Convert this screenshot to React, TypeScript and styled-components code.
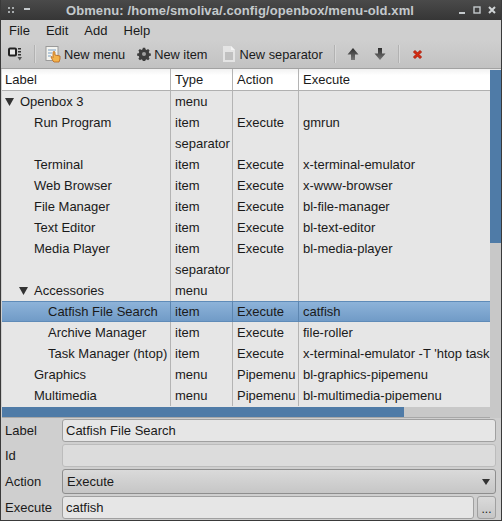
import styled, { createGlobalStyle } from 'styled-components';

const GlobalStyle = createGlobalStyle`
  html, body {
    margin: 0;
    padding: 0;
    background: #3a3a3a;
  }
`;

const Window = styled.div`
  width: 502px;
  height: 521px;
  box-sizing: border-box;
  display: flex;
  flex-direction: column;
  overflow: hidden;
  background: #cfcfcf;
  border: 1px solid #3a3a3a;
  border-top: none;
  font-family: 'Liberation Sans', Arial, sans-serif;
  font-size: 13px;
  color: #1a1a1a;
`;

const TitleBar = styled.div`
  height: 20px;
  flex: none;
  display: flex;
  align-items: center;
  background: linear-gradient(#4a4a4a, #363636);
  color: #c4c9cc;
  font-size: 13px;
  font-weight: 700;
  padding: 0 5px 0 6px;
`;

const TitleText = styled.div`
  flex: 1;
  text-align: center;
  padding-right: 8px;
  letter-spacing: 0.1px;
  white-space: nowrap;
`;

const WinButtons = styled.div`
  display: flex;
  gap: 7px;
  align-items: center;
`;

const MenuBar = styled.div`
  height: 20px;
  flex: none;
  display: flex;
  align-items: center;
  gap: 16px;
  padding: 0 8px;
  background: #cfcfcf;
`;

const Toolbar = styled.div`
  height: 28px;
  flex: none;
  display: flex;
  align-items: center;
  padding: 0 6px;
  font-size: 12.8px;
  background: linear-gradient(#cfcfcf, #c2c2c2);
  border-bottom: 1px solid #a2a2a2;
`;

const ToolSep = styled.div`
  width: 1px;
  height: 18px;
  background: #b2b2b2;
  box-shadow: 1px 0 0 #d8d8d8;
`;

const ToolButton = styled.div<{ $ml?: number; $gap?: number }>`
  display: flex;
  align-items: center;
  gap: ${props => props.$gap ?? 3}px;
  margin-left: ${props => props.$ml ?? 0}px;
  white-space: nowrap;
`;

const TreeArea = styled.div`
  flex: 1;
  min-height: 0;
  display: grid;
  grid-template-columns: 1fr 11px;
  margin: 0 0 0 1px;
`;

const TreeMain = styled.div`
  min-width: 0;
  overflow: hidden;
  display: flex;
  flex-direction: column;
  background: #e6e6e6;
`;

const Row = styled.div<{ $selected?: boolean }>`
  flex: none;
  height: 21px;
  box-sizing: border-box;
  display: grid;
  grid-template-columns: 169px 62px 66px 1fr;
  line-height: 20px;
  background: ${props => (props.$selected ? 'linear-gradient(#8fb4da, #6f9ac6)' : 'transparent')};
  box-shadow: ${props => (props.$selected ? 'inset 0 1px 0 #5f8bb8, inset 0 -1px 0 #5f8bb8' : 'none')};
`;

const HeadRow = styled(Row)`
  height: 22px;
  background: linear-gradient(#f2f2f2, #ffffff 30%);
  border-bottom: 1px solid #b0b0b0;
`;

const Cell = styled.div<{ $depth?: number; $selected?: boolean; $last?: boolean }>`
  box-sizing: border-box;
  padding-left: ${props => (props.$depth !== undefined ? 3 + props.$depth * 14 : 4)}px;
  border-right: ${props =>
    props.$last ? '0' : `1px solid ${props.$selected ? '#5d86b0' : '#b4b4b4'}`};
  white-space: nowrap;
  overflow: hidden;
  display: flex;
  align-items: center;
`;

const HeadCell = styled(Cell)<{ $first?: boolean }>`
  padding-left: ${props => (props.$first ? 3 : 4)}px;
  padding-top: 1px;
`;

const Arrow = styled.svg`
  flex: none;
  width: 9px;
  height: 8px;
  margin-right: 6px;
`;

const NoArrow = styled.span`
  flex: none;
  width: 15px;
`;

const VScroll = styled.div`
  background: #c8c8c8;
  border-top: 1px solid #e6e6e6;
`;

const VThumb = styled.div`
  height: 173px;
  background: #4f7ba7;
`;

const HScroll = styled.div`
  flex: none;
  height: 11px;
  box-sizing: border-box;
  margin-top: auto;
  background: #c8c8c8;
  border-bottom: 1px solid #a8a8a8;
`;

const HThumb = styled.div`
  width: 402px;
  height: 100%;
  background: #4f7ba7;
`;

const Form = styled.div`
  flex: none;
  display: grid;
  grid-template-columns: 57px 1fr;
  row-gap: 2px;
  align-items: center;
  padding: 1px 5px 1px 4px;
  background: #cfcfcf;
`;

const FieldLabel = styled.div`
  line-height: 22px;
`;

const Input = styled.div<{ $disabled?: boolean }>`
  height: 23px;
  box-sizing: border-box;
  padding-left: 3px;
  line-height: 21px;
  border: 1px solid ${props => (props.$disabled ? '#bcbcbc' : '#a0a0a0')};
  border-radius: 3px;
  background: ${props => (props.$disabled ? '#dcdcdc' : '#e6e6e6')};
`;

const Combo = styled.div`
  height: 25px;
  box-sizing: border-box;
  display: flex;
  justify-content: space-between;
  align-items: center;
  padding: 0 5px 0 4px;
  border: 1px solid #8e8e8e;
  border-radius: 3px;
  background: linear-gradient(#dadada, #c6c6c6);
`;

const ExecRow = styled.div`
  display: flex;
  gap: 3px;
`;

const ExecInput = styled(Input)`
  flex: 1;
`;

const DotsButton = styled.div`
  width: 19px;
  height: 23px;
  box-sizing: border-box;
  border: 1px solid #a0a0a0;
  border-radius: 3px;
  background: linear-gradient(#dadada, #c6c6c6);
  text-align: center;
  line-height: 24px;
  font-size: 12px;
`;

const GEAR =
  'M6.5 0h3l.4 2 1.5.7 1.8-1.1 2 2-1.1 1.8.7 1.5 2 .4v3l-2 .4-.7 1.5 1.1 1.8-2 2-1.8-1.1-1.5.7-.4 2h-3l-.4-2-1.5-.7-1.8 1.1-2-2 1.1-1.8-.7-1.5-2-.4v-3l2-.4.7-1.5-1.1-1.8 2-2 1.8 1.1 1.5-.7z';

interface TreeRow {
  label: string;
  depth: number;
  open?: boolean;
  type?: string;
  action?: string;
  execute?: string;
  selected?: boolean;
}

const rows: TreeRow[] = [
  { label: 'Openbox 3', depth: 0, open: true, type: 'menu' },
  { label: 'Run Program', depth: 1, type: 'item', action: 'Execute', execute: 'gmrun' },
  { label: '', depth: 1, type: 'separator' },
  { label: 'Terminal', depth: 1, type: 'item', action: 'Execute', execute: 'x-terminal-emulator' },
  { label: 'Web Browser', depth: 1, type: 'item', action: 'Execute', execute: 'x-www-browser' },
  { label: 'File Manager', depth: 1, type: 'item', action: 'Execute', execute: 'bl-file-manager' },
  { label: 'Text Editor', depth: 1, type: 'item', action: 'Execute', execute: 'bl-text-editor' },
  { label: 'Media Player', depth: 1, type: 'item', action: 'Execute', execute: 'bl-media-player' },
  { label: ' ', depth: 1, type: 'separator' },
  { label: 'Accessories', depth: 1, open: true, type: 'menu' },
  { label: 'Catfish File Search', depth: 2, type: 'item', action: 'Execute', execute: 'catfish', selected: true },
  { label: 'Archive Manager', depth: 2, type: 'item', action: 'Execute', execute: 'file-roller' },
  { label: 'Task Manager (htop)', depth: 2, type: 'item', action: 'Execute', execute: "x-terminal-emulator -T 'htop task" },
  { label: 'Graphics', depth: 1, type: 'menu', action: 'Pipemenu', execute: 'bl-graphics-pipemenu' },
  { label: 'Multimedia', depth: 1, type: 'menu', action: 'Pipemenu', execute: 'bl-multimedia-pipemenu' },
];

function WinIcons() {
  return (
    <WinButtons>
      <svg width="8" height="8" viewBox="0 0 8 8">
        <rect x="1" y="6" width="6" height="2" fill="#c4c9cc" />
      </svg>
      <svg width="8" height="8" viewBox="0 0 8 8">
        <rect x="1" y="1" width="6" height="6" fill="none" stroke="#c4c9cc" strokeWidth="1.4" />
      </svg>
      <svg width="8" height="8" viewBox="0 0 8 8">
        <path d="M1 1l6 6M7 1l-6 6" stroke="#d0d4d6" strokeWidth="2" />
      </svg>
    </WinButtons>
  );
}

export default function App() {
  return (
    <>
      <GlobalStyle />
      <Window>
        <TitleBar>
          <svg width="23" height="8" viewBox="0 0 23 8">
            <path d="M1 1h2v2H1zM5 1h2v2H5zM1 5h2v2H1zM5 5h2v2H5z" fill="#a8acae" />
            <rect x="17" y="2" width="6" height="2" fill="#c4c9cc" />
          </svg>
          <TitleText>Obmenu: /home/smoliva/.config/openbox/menu-old.xml</TitleText>
          <WinIcons />
        </TitleBar>
        <MenuBar>
          <span>File</span>
          <span>Edit</span>
          <span>Add</span>
          <span>Help</span>
        </MenuBar>
        <Toolbar>
          <svg width="16" height="18" viewBox="0 0 16 18">
            <rect x="2" y="3.5" width="7" height="7" rx="1" fill="#e8e8e8" stroke="#222" strokeWidth="2" />
            <path d="M11 3h3v1.500h-3zM11 6h3v1.500h-3zM11 9h3v1.500h-3z" fill="#333" />
            <path d="M10.500 12h4.500l-2.250 3.500z" fill="#555" />
          </svg>
          <ToolButton $ml={11}>
            <ToolSep />
          </ToolButton>
          <ToolButton $ml={10} $gap={2}>
            <svg width="17" height="18" viewBox="0 0 17 18">
              <rect x="1" y="1.500" width="12" height="14" fill="#f4f4f0" stroke="#9a9a9a" />
              <path d="M3 5h8M3 8h4M3 11h3" stroke="#7aa0c4" />
              <path d="M8 16l-2-4 1-.5 1 1V7.500a1 1 0 0 1 2 0V10l5 1v3l-1 3H9z" fill="#f3b24b" stroke="#b5651d" strokeWidth=".8" />
            </svg>
            New menu
          </ToolButton>
          <ToolButton $ml={12}>
            <svg width="14" height="14" viewBox="-1 -1 18 18">
              <path d={GEAR} fill="#3d3d3d" />
              <circle cx="8" cy="8" r="2.600" fill="#a0a0a0" />
            </svg>
            New item
          </ToolButton>
          <ToolButton $ml={13}>
            <svg width="16" height="18" viewBox="0 0 16 18">
              <path d="M2 1h8l4 4v12H2z" fill="#e4e4e4" />
              <path d="M10 1v4h4z" fill="#f4f4f4" />
              <path d="M4 8h8M4 10h8M4 12h8M4 14h8" stroke="#9c9c9c" />
            </svg>
            New separator
          </ToolButton>
          <ToolButton $ml={11}>
            <ToolSep />
          </ToolButton>
          <ToolButton $ml={12}>
            <svg width="12" height="14" viewBox="0 0 12 14">
              <defs>
                <linearGradient id="upFade" x1="0" y1="0" x2="0" y2="1">
                  <stop offset="0" stopColor="#2e2e2e" />
                  <stop offset="1" stopColor="#777" />
                </linearGradient>
              </defs>
              <path d="M6 1l5.500 6.500H8V13H4V7.500H.5z" fill="url(#upFade)" />
            </svg>
          </ToolButton>
          <ToolButton $ml={15}>
            <svg width="12" height="14" viewBox="0 0 12 14">
              <defs>
                <linearGradient id="downFade" x1="0" y1="0" x2="0" y2="1">
                  <stop offset="0" stopColor="#2e2e2e" />
                  <stop offset="1" stopColor="#777" />
                </linearGradient>
              </defs>
              <path d="M6 13L.5 6.500H4V1h4v5.500h3.500z" fill="url(#downFade)" />
            </svg>
          </ToolButton>
          <ToolButton $ml={12}>
            <ToolSep />
          </ToolButton>
          <ToolButton $ml={13}>
            <svg width="11" height="11" viewBox="0 0 11 11">
              <path d="M1.500 3L3 1.500l2.500 2.500L8 1.500 9.500 3 7 5.500 9.500 8 8 9.500 5.500 7 3 9.500 1.500 8 4 5.500z" fill="#d52b10" stroke="#b01c08" strokeWidth="1" />
            </svg>
          </ToolButton>
        </Toolbar>
        <TreeArea>
          <TreeMain>
            <HeadRow>
              <HeadCell $first>Label</HeadCell>
              <HeadCell>Type</HeadCell>
              <HeadCell>Action</HeadCell>
              <HeadCell $last>Execute</HeadCell>
            </HeadRow>
            {rows.map(row => (
              <Row key={row.label + row.execute} $selected={row.selected}>
                <Cell $depth={row.depth} $selected={row.selected}>
                  {row.open ? (
                    <Arrow viewBox="0 0 9 8">
                      <path d="M0 0h9L4.500 8z" fill="#333" />
                    </Arrow>
                  ) : (
                    <NoArrow />
                  )}
                  {row.label}
                </Cell>
                <Cell $selected={row.selected}>{row.type}</Cell>
                <Cell $selected={row.selected}>{row.action}</Cell>
                <Cell $last>{row.execute}</Cell>
              </Row>
            ))}
            <HScroll>
              <HThumb />
            </HScroll>
          </TreeMain>
          <VScroll>
            <VThumb />
          </VScroll>
        </TreeArea>
        <Form>
          <FieldLabel>Label</FieldLabel>
          <Input>Catfish File Search</Input>
          <FieldLabel>Id</FieldLabel>
          <Input $disabled />
          <FieldLabel>Action</FieldLabel>
          <Combo>
            Execute
            <svg width="8" height="6" viewBox="0 0 8 6">
              <path d="M0 0h8L4 6z" fill="#333" />
            </svg>
          </Combo>
          <FieldLabel>Execute</FieldLabel>
          <ExecRow>
            <ExecInput>catfish</ExecInput>
            <DotsButton>...</DotsButton>
          </ExecRow>
        </Form>
      </Window>
    </>
  );
}
